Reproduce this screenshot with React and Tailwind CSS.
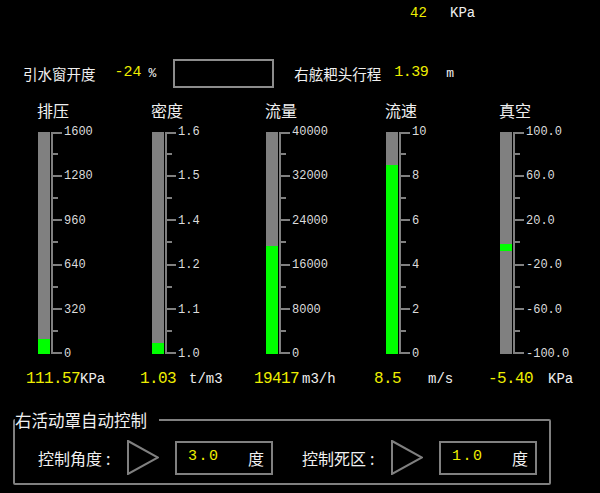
const GAUGES = [
    { title: "排压", w: "w-[114px]", ticks: ["1600", "1280", "960", "640", "320", "0"], min: 0, max: 1600, value: 111.57, text: "111.57", unit: "KPa", vw: "w-[54px]" },
    { title: "密度", w: "w-[114px]", ticks: ["1.6", "1.5", "1.4", "1.2", "1.1", "1.0"], min: 1, max: 1.6, value: 1.03, text: "1.03", unit: "t/m3", vw: "w-[49px]" },
    { title: "流量", w: "w-[120px]", ticks: ["40000", "32000", "24000", "16000", "8000", "0"], min: 0, max: 40000, value: 19417, text: "19417", unit: "m3/h", vw: "w-[48px]" },
    { title: "流速", w: "w-[114px]", ticks: ["10", "8", "6", "4", "2", "0"], min: 0, max: 10, value: 8.5, text: "8.5", unit: "m/s", vw: "w-[54px]" },
    { title: "真空", w: "w-[100px]", ticks: ["100.0", "60.0", "20.0", "-20.0", "-60.0", "-100.0"], min: -100, max: 100, value: -5.4, text: "-5.40", unit: "KPa", vw: "w-[60px]", marker: true },
];

const BAR_H = 222;

function Scale() {
    const marks = [];
    for (let i = 0; i < 5; i++) {
        const y = Math.round(i * 44.2);
        marks.push(<rect key={"M" + i} x="1" y={Math.max(y - 1, 0)} width="11" height="2" fill="#808080" />);
        marks.push(<rect key={"m" + i} x="1" y={Math.round(y + 22.1) - 1} width="7" height="2" fill="#808080" />);
    }
    return (
        <svg width="12" height={BAR_H} className="shrink-0">
            <rect x="1" y="0" width="2" height={BAR_H} fill="#808080" />
            {marks}
            <rect x="1" y={BAR_H - 2} width="11" height="2" fill="#808080" />
        </svg>
    );
}

function Gauge({ g }) {
    const pct = (g.value - g.min) / (g.max - g.min);
    return (
        <div className={`${g.w} shrink-0 flex flex-col`}>
            <div className="ml-[11px] h-[20px] leading-[20px] text-[16px] text-[#f0f0f0] font-['Noto_Sans_CJK_SC',sans-serif]">
                {g.title}
            </div>
            <div className="ml-[12px] mt-[12px] h-[222px] flex items-start">
                <div className="relative w-[12px] h-[222px] bg-[#808080]">
                    {g.marker ? (
                        <div
                            className="absolute left-0 w-full h-[7px] bg-[#00ff00]"
                            style={{ top: Math.round((1 - pct) * BAR_H) - 5 }}
                        />
                    ) : (
                        <div
                            className="absolute left-0 bottom-0 w-full bg-[#00ff00]"
                            style={{ height: Math.round(pct * BAR_H) }}
                        />
                    )}
                </div>
                <Scale />
                <div className="-mt-[7px] ml-[2px] h-[236px] flex flex-col justify-between text-[12px] leading-[14px] text-[#dcdcdc] font-['Liberation_Mono',monospace]">
                    {g.ticks.map((t) => (
                        <span key={t}>{t}</span>
                    ))}
                </div>
            </div>
            <div className="mt-[15px] h-[20px] flex items-center font-['Liberation_Mono',monospace]">
                <span className={`${g.vw} shrink-0 text-[16px] tracking-[-0.6px] text-[#eeee00] whitespace-nowrap`}>{g.text}</span>
                <span className="text-[14px] text-[#f0f0f0]">{g.unit}</span>
            </div>
        </div>
    );
}

function Triangle() {
    return (
        <svg width="32" height="35" className="shrink-0">
            <polygon points="1,1 31,17.5 1,34" fill="none" stroke="#808080" strokeWidth="2" />
        </svg>
    );
}

function SetBox({ value }) {
    return (
        <div className="ml-[16px] w-[98px] h-[34px] border-2 border-[#808080] flex items-center pl-[11px]">
            <span className="w-[60px] text-[15px] tracking-[1.5px] text-[#eeee00] font-['Liberation_Mono',monospace]">{value}</span>
            <span className="text-[16px] text-[#f0f0f0]">度</span>
        </div>
    );
}

function CtrlLabel({ text, className = "" }) {
    return (
        <div className={`${className} w-[89px] shrink-0 text-[16px]`}>
            {text}
            <span className="ml-[4px]">:</span>
        </div>
    );
}

export default function App() {
    return (
        <div className="w-[600px] h-[493px] bg-black overflow-hidden text-[#f0f0f0] font-['Noto_Sans_CJK_SC',sans-serif]">
            {/* top reading */}
            <div className="pt-[3px] pl-[410px] h-[23px] flex items-center font-['Liberation_Mono',monospace] text-[14px]">
                <span className="w-[40px] text-[#eeee00]">42</span>
                <span>KPa</span>
            </div>

            {/* window opening / drag head travel */}
            <div className="mt-[36px] pl-[23px] h-[29px] flex items-center">
                <span className="text-[14.5px]">引水窗开度</span>
                <span className="ml-[19px] text-[15px] text-[#eeee00] font-['Liberation_Mono',monospace]">-24</span>
                <span className="ml-[7px] text-[13px] font-['Liberation_Mono',monospace]">%</span>
                <div className="ml-[17px] w-[101px] h-[29px] border-2 border-[#8c8c8c]" />
                <span className="ml-[20px] text-[14.5px]">右舷耙头行程</span>
                <span className="ml-[13px] text-[15px] tracking-[-0.5px] text-[#eeee00] font-['Liberation_Mono',monospace]">1.39</span>
                <span className="ml-[18px] text-[13px] font-['Liberation_Mono',monospace]">m</span>
            </div>

            {/* gauges */}
            <div className="mt-[12px] pl-[26px] flex">
                {GAUGES.map((g) => (
                    <Gauge key={g.title} g={g} />
                ))}
            </div>

            {/* right movable hood auto control */}
            <fieldset className="mt-[21px] ml-[13px] w-[538px] border-2 border-[#808080] p-0 pb-[8px] rounded-[2px]">
                <legend className="p-0 pr-[12px] h-[20px] leading-[20px] text-[16.5px]">右活动罩自动控制</legend>
                <div className="pt-[10px] pl-[23px] flex items-center">
                    <CtrlLabel text="控制角度" />
                    <Triangle />
                    <SetBox value="3.0" />
                    <CtrlLabel text="控制死区" className="ml-[29px]" />
                    <Triangle />
                    <SetBox value="1.0" />
                </div>
            </fieldset>
        </div>
    );
}
